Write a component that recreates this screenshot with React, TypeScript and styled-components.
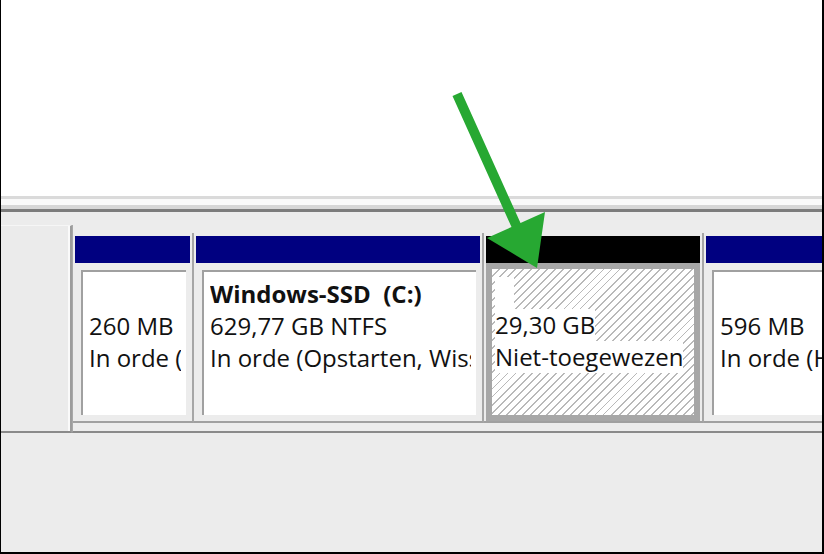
import styled, { createGlobalStyle } from "styled-components";

const GlobalStyle = createGlobalStyle`
	html, body {
		margin: 0;
		padding: 0;
		background: #ffffff;
	}
	* {
		box-sizing: border-box;
	}
`;

const Frame = styled.div`
	position: relative;
	width: 824px;
	height: 554px;
	display: flex;
	flex-direction: column;
	overflow: hidden;
	border-left: 1px solid #000;
	border-right: 2px solid #000;
	border-bottom: 2px solid #000;
	background: #ececec;
	font-family: "Segoe UI", "Open Sans", sans-serif;
	color: #111;
`;

const TopPane = styled.div`
	height: 196px;
	background: #ffffff;
`;

const Splitter = styled.div`
	height: 16px;
	border-top: 3px solid #dadada;
	border-bottom: 3px solid #7c7c7c;
	background: linear-gradient(#f9f9f9 0 6px, #d6d6d6 6px);
`;

const LowerPane = styled.div`
	flex: 1;
	padding-top: 13px;
`;

const DiskRow = styled.div`
	display: flex;
	height: 208px;
`;

const DiskLabel = styled.div`
	flex: none;
	width: 71px;
	background: #ebebeb;
	border-top: 1px solid #f6f6f6;
	border-right: 2px solid #9c9c9c;
	border-bottom: 2px solid #8a8a8a;
	box-shadow: inset -2px 0 0 #fafafa;
`;

const Partitions = styled.div`
	flex: 1;
	min-width: 0;
	display: flex;
	overflow: hidden;
	padding: 8px 0;
	border-left: 1px solid #a8a8a8;
	border-bottom: 2px solid #8a8a8a;
`;

const Partition = styled.div<{ $width: number }>`
	flex: none;
	width: ${(p) => p.$width}px;
	display: flex;
	flex-direction: column;
	padding: 3px 2px 0 2px;
	border-right: 2px solid #a6a6a6;
	border-bottom: 2px solid #a0a0a0;
`;

const Header = styled.div<{ $color: string }>`
	height: 27px;
	background: ${(p) => p.$color};
`;

const Body = styled.div<{ $selected?: boolean }>`
	flex: 1;
	min-height: 0;
	display: flex;
	padding: ${(p) => (p.$selected ? "0" : "7px 4px 6px 6px")};
	border: ${(p) => (p.$selected ? "6px solid #a7a7a7" : "none")};
`;

const Volume = styled.div<{ $hatched?: boolean }>`
	flex: 1;
	min-width: 0;
	overflow: hidden;
	padding: ${(p) => (p.$hatched ? "8px 6px 0 3px" : "6px 5px 0 6px")};
	border-top: ${(p) => (p.$hatched ? "none" : "2px solid #a0a0a0")};
	border-left: ${(p) => (p.$hatched ? "none" : "2px solid #a0a0a0")};
	background: ${(p) =>
		p.$hatched
			? "repeating-linear-gradient(135deg, #ffffff 0 4.4px, #b9b9b9 4.4px 5.7px)"
			: "#ffffff"};
`;

const Line = styled.div<{ $bold?: boolean }>`
	width: fit-content;
	max-width: 100%;
	overflow: hidden;
	font-size: 24px;
	line-height: 32px;
	height: 32px;
	white-space: pre;
	font-weight: ${(p) => (p.$bold ? 700 : 400)};
	background: #ffffff;
`;

const Arrow = styled.svg`
	position: absolute;
	left: -1px;
	top: 0;
	pointer-events: none;
`;

type Part = {
	width: number;
	color: string;
	lines: { text: string; bold?: boolean }[];
	selected?: boolean;
};

const parts: Part[] = [
	{
		width: 121,
		color: "#000080",
		lines: [{ text: "" }, { text: "260 MB" }, { text: "In orde (" }],
	},
	{
		width: 290,
		color: "#000080",
		lines: [
			{ text: "Windows-SSD  (C:)", bold: true },
			{ text: "629,77 GB NTFS" },
			{ text: "In orde (Opstarten, Wisselbestand)" },
		],
	},
	{
		width: 220,
		color: "#000000",
		selected: true,
		lines: [{ text: "\u00a0\u00a0\u00a0" }, { text: "29,30 GB" }, { text: "Niet-toegewezen" }],
	},
	{
		width: 200,
		color: "#000080",
		lines: [{ text: "" }, { text: "596 MB" }, { text: "In orde (H" }],
	},
];

function App() {
	return (
		<>
			<GlobalStyle />
			<Frame>
				<TopPane />
				<Splitter />
				<LowerPane>
					<DiskRow>
						<DiskLabel />
						<Partitions>
							{parts.map((part, i) => (
								<Partition key={i} $width={part.width}>
									<Header $color={part.color} />
									<Body $selected={part.selected}>
										<Volume $hatched={part.selected}>
											{part.lines.map((line, j) => (
												<Line key={j} $bold={line.bold}>
													{line.text}
												</Line>
											))}
										</Volume>
									</Body>
								</Partition>
							))}
						</Partitions>
					</DiskRow>
				</LowerPane>
				<Arrow width="824" height="554" viewBox="0 0 824 554">
					<polygon
						points="452.5,96 461.5,92 520.5,223 545,212 537,268 487,238 511.5,227"
						fill="#27a832"
					/>
				</Arrow>
			</Frame>
		</>
	);
}

export default App;
